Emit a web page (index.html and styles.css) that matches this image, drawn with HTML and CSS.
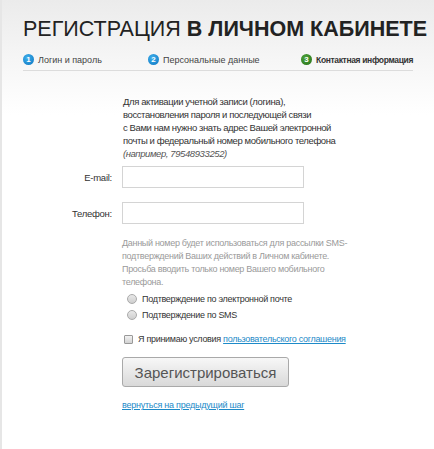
FILE: index.html
```html
<!DOCTYPE html>
<html lang="ru">
<head>
<meta charset="utf-8">
<title>Регистрация</title>
<link rel="stylesheet" href="styles.css">
</head>
<body>
<div class="page">
  <h1 class="title">РЕГИСТРАЦИЯ <b>В ЛИЧНОМ КАБИНЕТЕ</b></h1>
  <div class="steps">
    <div class="step"><span class="num blue">1</span>Логин и пароль</div>
    <div class="step"><span class="num blue">2</span>Персональные данные</div>
    <div class="step active"><span class="num green">3</span>Контактная информация</div>
  </div>
  <div class="form">
    <p class="intro">Для активации учетной записи (логина),<br>восстановления пароля и последующей связи<br>с Вами нам нужно знать адрес Вашей электронной<br>почты и федеральный номер мобильного телефона<br><i>(например, 79548933252)</i></p>
    <div class="row row-email">
      <label class="lbl">E-mail:</label>
      <input class="field" type="text">
    </div>
    <div class="row row-phone">
      <label class="lbl">Телефон:</label>
      <input class="field" type="text">
    </div>
    <p class="hint">Данный номер будет использоваться для рассылки SMS-<br>подтверждений Ваших действий в Личном кабинете.<br>Просьба вводить только номер Вашего мобильного<br>телефона.</p>
    <div class="radios">
      <label class="opt"><span class="radio"></span><span>Подтверждение по электронной почте</span></label>
      <label class="opt"><span class="radio"></span><span>Подтверждение по SMS</span></label>
    </div>
    <label class="agree"><span class="check"></span><span>Я принимаю условия <a href="#">пользовательского соглашения</a></span></label>
    <button class="btn" type="button">Зарегистрироваться</button>
    <a class="back" href="#">вернуться на предыдущий шаг</a>
  </div>
</div>
</body>
</html>
```
FILE: styles.css
```css
html, body {
  margin: 0;
  padding: 0;
  background: #fff;
}
body {
  font-family: "Liberation Sans", Arial, sans-serif;
  color: #333;
}
.page {
  min-height: 449px;
  box-sizing: border-box;
  border-left: 2px solid #e6e6e6;
  background: linear-gradient(#ebebeb 0px, #f6f6f6 60px, #ffffff 115px);
  padding: 0 21px 0 21px;
}
.title {
  margin: 0;
  padding-top: 16px;
  font-size: 21.5px;
  line-height: 26px;
  font-weight: normal;
  color: #222;
  white-space: nowrap;
}
.title b {
  font-weight: bold;
}
.steps {
  display: grid;
  grid-template-columns: 125px 1fr auto;
  align-items: center;
  margin-top: 12px;
  padding-bottom: 5px;
  border-bottom: 1px solid #dcdcdc;
  font-size: 9px;
  color: #444;
}
.step {
  display: flex;
  align-items: center;
  gap: 4px;
  white-space: nowrap;
}
.step.active {
  font-weight: bold;
  color: #333;
  font-size: 8.5px;
  letter-spacing: -0.35px;
}
.num {
  width: 11px;
  height: 11px;
  border-radius: 50%;
  color: #fff;
  font-size: 8px;
  font-weight: bold;
  letter-spacing: 0;
  display: inline-flex;
  align-items: center;
  justify-content: center;
  line-height: 1;
}
.num.blue {
  background: radial-gradient(circle at 40% 35%, #3fb0ec, #0b74c0);
}
.num.green {
  background: radial-gradient(circle at 40% 35%, #4da33a, #267018);
}
.form {
  padding-left: 99px;
  font-size: 9px;
  letter-spacing: -0.3px;
}
.intro {
  margin: 24px 0 0 1px;
  line-height: 13px;
  font-size: 9.5px;
  letter-spacing: -0.4px;
  color: #333;
  white-space: nowrap;
}
.intro i {
  color: #555;
}
.row {
  display: grid;
  grid-template-columns: 112px 182px;
  column-gap: 10px;
  align-items: center;
  margin-left: -122px;
  font-size: 9.5px;
  letter-spacing: -0.25px;
}
.row-email {
  margin-top: 6px;
}
.row-phone {
  margin-top: 14px;
}
.lbl {
  text-align: right;
  color: #333;
}
.field {
  box-sizing: border-box;
  height: 22px;
  width: 182px;
  border: 1px solid #d4d4d4;
  background: #fff;
  margin: 0;
}
.hint {
  margin: 13px 0 0 0;
  line-height: 13px;
  color: #9a9a9a;
  white-space: nowrap;
}
.radios {
  margin-top: 5px;
  margin-left: 5px;
  display: flex;
  flex-direction: column;
  gap: 6px;
}
.opt, .agree {
  display: flex;
  align-items: center;
  gap: 5px;
  color: #333;
}
.radio {
  width: 8px;
  height: 8px;
  border-radius: 50%;
  border: 1px solid #aaa;
  background: linear-gradient(#e8e8e8, #cfcfcf);
}
.agree {
  margin-top: 14px;
  margin-left: 2px;
  gap: 5px;
}
.check {
  width: 7px;
  height: 7px;
  border: 1px solid #999;
  border-radius: 1px;
  background: linear-gradient(#f2f2f2, #d2d2d2);
}
.agree a, .back {
  color: #1d8ac8;
  text-decoration: underline;
}
.btn {
  display: block;
  margin-top: 13px;
  width: 167px;
  height: 30px;
  border: 1px solid #a9a9a9;
  border-radius: 3px;
  background: linear-gradient(#f7f7f7, #d9d9d9);
  font-family: "Liberation Sans", Arial, sans-serif;
  font-size: 15px;
  letter-spacing: 0;
  color: #555;
  padding: 0;
}
.back {
  display: inline-block;
  margin-top: 13px;
  font-size: 9px;
  letter-spacing: -0.25px;
}
```
